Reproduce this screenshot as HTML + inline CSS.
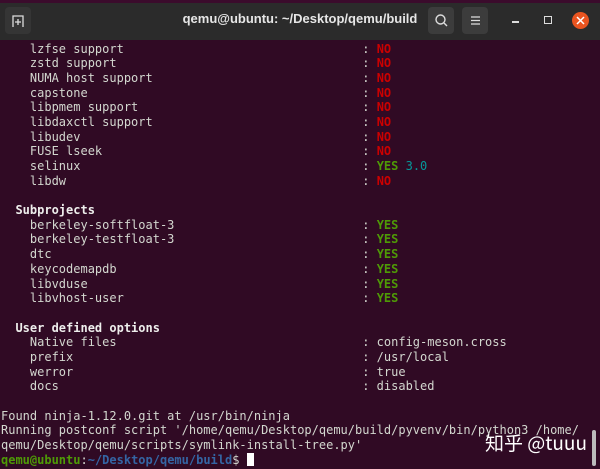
<!DOCTYPE html>
<html><head><meta charset="utf-8"><style>
body{margin:0;width:600px;height:469px;overflow:hidden;background:#300a24;position:relative}
.top{position:absolute;left:0;top:0;width:600px;height:3px;background:#3b0b2c}
.bar{position:absolute;left:0;top:3px;width:600px;height:37px;background:#2b2b2b}
.title{position:absolute;left:0;width:600px;top:11px;text-align:center;color:#e6e6e6;font:bold 13px "Liberation Sans",sans-serif;}
.btn{position:absolute;top:7px;width:26px;height:27px;background:#3c3c3c;border-radius:4px}
pre{position:absolute;left:1px;top:41.5px;margin:0;font:12px/14.68px "DejaVu Sans Mono","Liberation Mono",monospace;color:#d3d7cf}
.r{color:#cc0000;font-weight:bold}.g{color:#4e9a06;font-weight:bold}.c{color:#06989a}.b{font-weight:bold;color:#eeeeec}
.p{color:#3465a4;font-weight:bold}
.wm{position:absolute;left:485px;top:429px;color:#fff;font:19px "Noto Sans CJK SC","Liberation Sans",sans-serif}
.sb{position:absolute;left:592px;top:430px;width:4px;height:36px;background:#bbb;border-radius:2px}
.cur{display:inline-block;width:7px;height:13px;background:#fff;vertical-align:-2px}
</style></head><body>
<div class="top"></div>
<div class="bar"></div>
<div class="btn" style="left:5px;background:#353535"></div>
<svg style="position:absolute;left:10px;top:13px" width="16" height="16" viewBox="0 0 16 16" fill="none" stroke="#ddd" stroke-width="1.3"><path d="M3 14V3h10v11M8 6v6M5 9h6"/></svg>
<div class="title">qemu@ubuntu: ~/Desktop/qemu/build</div>
<div class="btn" style="left:428px"></div>
<svg style="position:absolute;left:434px;top:13px" width="15" height="15" viewBox="0 0 15 15" fill="none" stroke="#ddd" stroke-width="1.4"><circle cx="6.5" cy="6.5" r="4.5"/><path d="M10 10l3 3"/></svg>
<div class="btn" style="left:462px"></div>
<svg style="position:absolute;left:470px;top:15px" width="11" height="11" viewBox="0 0 11 11" stroke="#ddd" stroke-width="1.3"><path d="M1 2h9M1 5.5h9M1 9h9"/></svg>
<div style="position:absolute;left:512px;top:21px;width:7px;height:1.5px;background:#ddd"></div>
<div style="position:absolute;left:544px;top:16px;width:6px;height:6px;border:1.3px solid #ddd"></div>
<div style="position:absolute;left:572px;top:12px;width:17px;height:17px;border-radius:50%;background:#e95420"></div>
<svg style="position:absolute;left:576px;top:16px" width="9" height="9" viewBox="0 0 9 9" stroke="#fff" stroke-width="1.5"><path d="M1 1l7 7M8 1l-7 7"/></svg>
<pre>    lzfse support                                 : <span class="r">NO</span>
    zstd support                                  : <span class="r">NO</span>
    NUMA host support                             : <span class="r">NO</span>
    capstone                                      : <span class="r">NO</span>
    libpmem support                               : <span class="r">NO</span>
    libdaxctl support                             : <span class="r">NO</span>
    libudev                                       : <span class="r">NO</span>
    FUSE lseek                                    : <span class="r">NO</span>
    selinux                                       : <span class="g">YES</span> <span class="c">3.0</span>
    libdw                                         : <span class="r">NO</span>

  <span class="b">Subprojects</span>
    berkeley-softfloat-3                          : <span class="g">YES</span>
    berkeley-testfloat-3                          : <span class="g">YES</span>
    dtc                                           : <span class="g">YES</span>
    keycodemapdb                                  : <span class="g">YES</span>
    libvduse                                      : <span class="g">YES</span>
    libvhost-user                                 : <span class="g">YES</span>

  <span class="b">User defined options</span>
    Native files                                  : config-meson.cross
    prefix                                        : /usr/local
    werror                                        : true
    docs                                          : disabled

Found ninja-1.12.0.git at /usr/bin/ninja
Running postconf script '/home/qemu/Desktop/qemu/build/pyvenv/bin/python3 /home/
qemu/Desktop/qemu/scripts/symlink-install-tree.py'
<span class="g">qemu@ubuntu</span>:<span class="p">~/Desktop/qemu/build</span>$ <span class="cur"></span></pre>
<div class="wm">知乎 @tuuu</div>
<div class="sb"></div>
</body></html>
